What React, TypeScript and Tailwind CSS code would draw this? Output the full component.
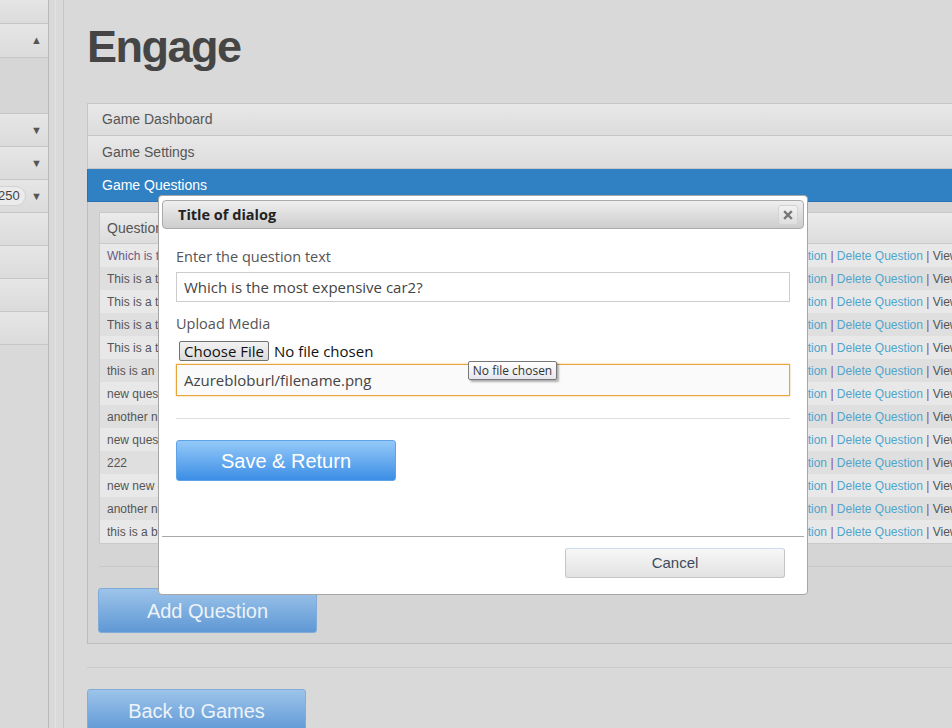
export default function App() {
  const rows = [
    "Which is the most expensive car?",
    "This is a test question one",
    "This is a test question two",
    "This is a test question three",
    "This is a test question four",
    "this is an other question",
    "new question here",
    "another new question",
    "new question again",
    "222",
    "new new question",
    "another new one",
    "this is a big question",
  ];
  const sideBase =
    "h-[33px] shrink-0 border-b border-[#c6c6c6] bg-gradient-to-b from-[#e6e6e6] to-[#dbdbdb] flex items-center pr-[6px] text-[11px] text-[#555]";
  const sideRow = sideBase + " justify-end";
  return (
    <div className="w-[952px] h-[728px] overflow-hidden bg-[#d9d9d9] relative flex font-['Liberation_Sans',Arial,sans-serif]">
      {/* sidebar */}
      <div className="w-[49px] shrink-0 h-full border-r border-[#b9b9b9] flex flex-col">
        <div className="h-[24px] shrink-0 border-b border-[#c6c6c6] bg-gradient-to-b from-[#e6e6e6] to-[#dbdbdb]" />
        <div className="h-[34px] shrink-0 border-b border-[#c6c6c6] bg-gradient-to-b from-[#e6e6e6] to-[#dbdbdb] flex items-center justify-end pr-[6px] text-[11px] text-[#555]">
          ▲
        </div>
        <div className="h-[56px] shrink-0 border-b border-[#c6c6c6] bg-[#d6d6d6]" />
        <div className={sideRow}>▼</div>
        <div className={sideRow}>▼</div>
        <div className={sideBase + " justify-between"}>
          <span className="-ml-[9px] pl-[6px] pr-[5px] h-[20px] rounded-full border border-[#d2d2d2] bg-[#ebebeb] text-[13px] leading-[18px] text-[#444]">
            250
          </span>
          <span>▼</span>
        </div>
        <div className={sideRow} />
        <div className={sideRow} />
        <div className={sideRow} />
        <div className={sideRow} />
      </div>
      <div className="w-[6px] shrink-0" />
      <div className="w-px shrink-0 bg-[#e4e4e4]" />
      <div className="w-[7px] shrink-0" />
      <div className="w-px shrink-0 bg-[#c6c6c6]" />

      {/* main */}
      <div className="w-[1000px] shrink-0 pl-[23px] flex flex-col">
        <h1 className="mt-[21px] h-[52px] leading-[52px] text-[45px] font-bold tracking-[-1.5px] text-[#454545]">
          Engage
        </h1>
        <div className="mt-[15px] -ml-[2px] h-px bg-[#c6c6c6]" />

        <div className="mt-[15px] flex flex-col">
          <div className="h-[33px] border border-[#c6c6c6] bg-gradient-to-b from-[#e8e8e8] to-[#dcdcdc] flex items-center pl-[14px] text-[14px] text-[#555]">
            Game Dashboard
          </div>
          <div className="h-[33px] border-x border-b border-[#c6c6c6] bg-gradient-to-b from-[#e8e8e8] to-[#dcdcdc] flex items-center pl-[14px] text-[14px] text-[#555]">
            Game Settings
          </div>
          <div className="h-[33px] border-x border-b border-[#2a72b3] bg-[#3080c4] flex items-center pl-[14px] text-[14px] text-white">
            Game Questions
          </div>
          <div className="border-x border-b border-[#bdbdbd] bg-[#d5d5d5] pt-[10px] pl-[11px] pb-[10px] flex flex-col">
            <div className="border border-[#c9c9c9] flex flex-col">
              <div className="h-[31px] border-b border-[#c9c9c9] bg-gradient-to-b from-[#ebebeb] to-[#dcdcdc] flex items-center pl-[7px] text-[14px] text-[#555]">
                Question
              </div>
              {rows.map((r, i) => (
                <div
                  key={i}
                  className={
                    "h-[23px] flex items-center text-[12px] " +
                    (i % 2 === 0 ? "bg-[#e8e8e8]" : "bg-[#dfdfdf]")
                  }
                >
                  <div
                    className={
                      "w-[655px] shrink-0 pl-[7px] whitespace-nowrap overflow-hidden " +
                      (i === 0 ? "text-[#6a5a88]" : "text-[#555]")
                    }
                  >
                    {r}
                  </div>
                  <div className="whitespace-nowrap">
                    <span className="text-[#4fa5cc]">Edit Question</span>
                    <span className="text-[#8a4c88]"> | </span>
                    <span className="text-[#4fa5cc]">Delete Question</span>
                    <span className="text-[#8a4c88]"> | </span>
                    <span className="text-[#555]">View Answers</span>
                  </div>
                </div>
              ))}
            </div>
            <div className="mt-[22px] h-px bg-[#c9c9c9]" />
            <button className="mt-[21px] -ml-px w-[219px] h-[45px] rounded-[3px] border border-[#82acd8] bg-gradient-to-b from-[#9dc4ea] to-[#5e98d5] text-[20px] text-[#eef3f8]">
              Add Question
            </button>
          </div>
          <div className="mt-[23px] h-px bg-[#cbcbcb]" />
          <button className="mt-[21px] w-[219px] h-[44px] shrink-0 rounded-[3px] border border-[#82acd8] bg-gradient-to-b from-[#9dc4ea] to-[#5e98d5] text-[20px] text-[#eef3f8]">
            Back to Games
          </button>
        </div>
      </div>

      {/* dialog */}
      <div className="absolute left-[158px] top-[195px] w-[650px] h-[400px] bg-white border border-[#a6a6a6] rounded-[4px] pt-[4px] px-[3px] flex flex-col font-['Open_Sans',sans-serif]">
        <div className="h-[29px] shrink-0 rounded-[4px] border border-[#aaaaaa] bg-gradient-to-b from-[#efefef] to-[#cdcdcd] flex items-center pl-[15px] pr-[5px] justify-between">
          <span className="text-[14.5px] font-bold text-[#222] leading-[18px]">
            Title of dialog
          </span>
          <div className="w-[20px] h-[20px] rounded-[3px] border border-[#d3d3d3] bg-gradient-to-b from-[#f2f2f2] to-[#dedede] flex items-center justify-center">
            <svg width="10" height="10" viewBox="0 0 10 10">
              <path
                d="M2 2 L8 8 M8 2 L2 8"
                stroke="#777"
                strokeWidth="2.4"
                strokeLinecap="square"
              />
            </svg>
          </div>
        </div>
        <div className="flex-1 px-[14px] flex flex-col">
          <div className="mt-[18px] h-[20px] leading-[20px] text-[14.5px] text-[#555]">
            Enter the question text
          </div>
          <div className="mt-[5px] h-[30px] border border-[#cccccc] px-[7px] text-[15px] text-[#444] flex items-center">
            Which is the most expensive car2?
          </div>
          <div className="mt-[12px] h-[20px] leading-[20px] text-[14.5px] text-[#555]">
            Upload Media
          </div>
          <div className="mt-[7px] h-[20px] flex items-center">
            <div className="ml-[3px] w-[90px] h-[20px] rounded-[2px] border border-[#707070] bg-gradient-to-b from-[#f2f2f2] to-[#dcdcdc] flex items-center justify-center text-[15px] text-[#111]">
              Choose File
            </div>
            <span className="ml-[5px] text-[15px] text-[#111]">
              No file chosen
            </span>
          </div>
          <div className="mt-[3px] h-[32px] border border-[#e6a63c] shadow-[0_0_2px_#f1c27a] bg-[#fafafa] px-[7px] text-[15px] text-[#444] flex items-center">
            Azurebloburl/filename.png
          </div>
          <div className="mt-[22px] h-px bg-[#dddddd]" />
          <button className="mt-[21px] w-[220px] h-[41px] rounded-[3px] border border-[#5fa2e6] bg-gradient-to-b from-[#93c9f8] to-[#3a8ee5] text-[20px] text-white font-['Liberation_Sans',Arial,sans-serif]">
            Save &amp; Return
          </button>
        </div>
        <div className="h-[58px] shrink-0 border-t border-[#a8a8a8] pt-[11px] pr-[19px] flex justify-end items-start">
          <button className="w-[220px] h-[30px] rounded-[3px] border border-[#c6c6c6] border-t-[#c8dcee] bg-gradient-to-b from-[#f7f7f7] to-[#e2e2e2] text-[15px] text-[#3b4b5b] font-['Liberation_Sans',Arial,sans-serif]">
            Cancel
          </button>
        </div>
      </div>

      {/* tooltip */}
      <div className="absolute left-[468px] top-[361px] w-[89px] h-[19px] border border-[#767676] rounded-[2px] bg-gradient-to-b from-white to-[#e6e7ee] shadow-[2px_2px_2px_rgba(0,0,0,0.3)] flex items-center justify-center text-[12px] text-[#333] font-['Open_Sans',sans-serif]">
        No file chosen
      </div>
    </div>
  );
}
